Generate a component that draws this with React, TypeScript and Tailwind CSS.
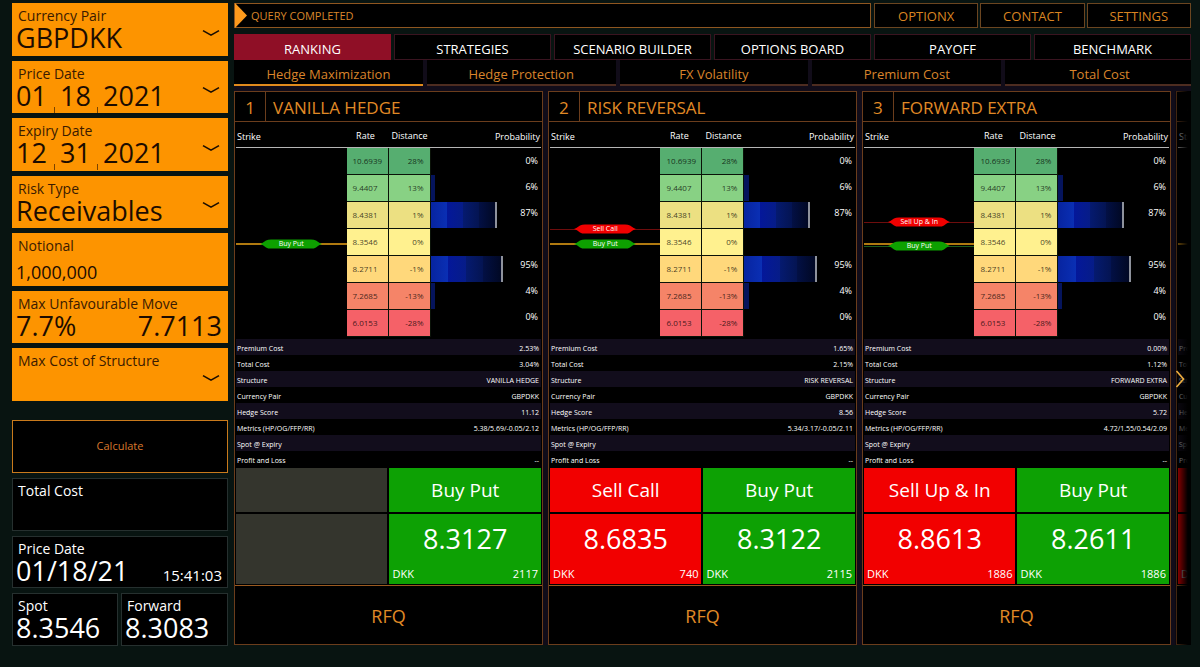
import { useState } from "react";
import type { ReactNode } from "react";

type Side = "buy" | "sell";

interface Marker {
  label: string;
  side: Side;
  top: number;
}

interface Leg {
  label: string;
  side: Side;
  price: string;
  points: string;
}

interface Strategy {
  rank: number;
  title: string;
  markers: Marker[];
  metrics: string[];
  legs: (Leg | null)[];
}

const LADDER = [
  { rate: "10.6939", distance: "28%", tone: "bg-[#56ae70]", bar: 0, capped: false, probability: "0%" },
  { rate: "9.4407", distance: "13%", tone: "bg-[#88d184]", bar: 6, capped: false, probability: "6%" },
  { rate: "8.4381", distance: "1%", tone: "bg-[#ece082]", bar: 82, capped: true, probability: "87%" },
  { rate: "8.3546", distance: "0%", tone: "bg-[#fff18f]", bar: 0, capped: false, probability: "" },
  { rate: "8.2711", distance: "-1%", tone: "bg-[#ffd87b]", bar: 90, capped: true, probability: "95%" },
  { rate: "7.2685", distance: "-13%", tone: "bg-[#f58468]", bar: 5, capped: false, probability: "4%" },
  { rate: "6.0153", distance: "-28%", tone: "bg-[#f56168]", bar: 0, capped: false, probability: "0%" },
];

const METRIC_LABELS = [
  "Premium Cost",
  "Total Cost",
  "Structure",
  "Currency Pair",
  "Hedge Score",
  "Metrics (HP/OG/FFP/RR)",
  "Spot @ Expiry",
  "Profit and Loss",
];

const STRATEGIES: Strategy[] = [
  {
    rank: 1,
    title: "VANILLA HEDGE",
    markers: [{ label: "Buy Put", side: "buy", top: 96 }],
    metrics: ["2.53%", "3.04%", "VANILLA HEDGE", "GBPDKK", "11.12", "5.38/5.69/-0.05/2.12", "", "--"],
    legs: [null, { label: "Buy Put", side: "buy", price: "8.3127", points: "2117" }],
  },
  {
    rank: 2,
    title: "RISK REVERSAL",
    markers: [
      { label: "Sell Call", side: "sell", top: 81 },
      { label: "Buy Put", side: "buy", top: 96 },
    ],
    metrics: ["1.65%", "2.15%", "RISK REVERSAL", "GBPDKK", "8.56", "5.34/3.17/-0.05/2.11", "", "--"],
    legs: [
      { label: "Sell Call", side: "sell", price: "8.6835", points: "740" },
      { label: "Buy Put", side: "buy", price: "8.3122", points: "2115" },
    ],
  },
  {
    rank: 3,
    title: "FORWARD EXTRA",
    markers: [
      { label: "Sell Up & In", side: "sell", top: 74 },
      { label: "Buy Put", side: "buy", top: 98 },
    ],
    metrics: ["0.00%", "1.12%", "FORWARD EXTRA", "GBPDKK", "5.72", "4.72/1.55/0.54/2.09", "", "--"],
    legs: [
      { label: "Sell Up & In", side: "sell", price: "8.8613", points: "1886" },
      { label: "Buy Put", side: "buy", price: "8.2611", points: "1886" },
    ],
  },
  {
    rank: 4,
    title: "",
    markers: [],
    metrics: ["", "", "", "", "", "", "", ""],
    legs: [{ label: "", side: "sell", price: "", points: "" }, null],
  },
];

const TABS = ["RANKING", "STRATEGIES", "SCENARIO BUILDER", "OPTIONS BOARD", "PAYOFF", "BENCHMARK"];
const SUBTABS = ["Hedge Maximization", "Hedge Protection", "FX Volatility", "Premium Cost", "Total Cost"];

function Chevron() {
  return (
    <svg viewBox="0 0 18 8" className="h-2 w-[18px]" fill="none" stroke="#1a0d00" strokeWidth="1.6" aria-hidden="true">
      <path d="M1 1.6 L9 6.2 L17 1.6" />
    </svg>
  );
}

function Field({ label, htmlFor, children }: { label: string; htmlFor: string; children?: ReactNode }) {
  return (
    <div className="relative flex flex-col bg-[#fd9400] px-1 pt-1 text-[#1c0c00]">
      <label htmlFor={htmlFor} className="block pl-0.5 text-sm leading-[17px] text-[#3a1a00]">
        {label}
      </label>
      {children}
    </div>
  );
}

function SelectField({ id, label, options }: { id: string; label: string; options: string[] }) {
  return (
    <Field label={label} htmlFor={id}>
      <select id={id} className="h-7 w-full appearance-none bg-transparent text-[27px] leading-7 outline-none">
        {options.map((o) => (
          <option key={o}>{o}</option>
        ))}
      </select>
      <span className="pointer-events-none absolute right-2 bottom-[19px]">
        <Chevron />
      </span>
    </Field>
  );
}

function DateField({ id, label, parts }: { id: string; label: string; parts: [string, string, string] }) {
  return (
    <Field label={label} htmlFor={id}>
      <div className="flex h-[31px] items-start text-[27px] leading-7">
        <input id={id} defaultValue={parts[0]} className="h-7 w-[38px] bg-transparent outline-none" />
        <span className="h-[6px] w-px self-end bg-[#7a4300]" />
        <input aria-label={`${label} day`} defaultValue={parts[1]} className="h-7 w-[42px] bg-transparent pl-[5px] outline-none" />
        <span className="h-[6px] w-px self-end bg-[#7a4300]" />
        <input aria-label={`${label} year`} defaultValue={parts[2]} className="h-7 w-[72px] bg-transparent pl-[5px] outline-none" />
      </div>
      <button type="button" aria-label={`Open ${label}`} className="absolute right-2 bottom-[19px]">
        <Chevron />
      </button>
    </Field>
  );
}

function Readout({ label, children }: { label: string; children?: ReactNode }) {
  return (
    <div className="border border-[#26302f] bg-black px-[3px] pt-1 text-white">
      <div className="pl-0.5 text-sm leading-4">{label}</div>
      {children}
    </div>
  );
}

function Sidebar() {
  return (
    <aside className="w-[216px] shrink-0">
      <form className="grid h-[398px] auto-rows-fr gap-[5px]">
        <SelectField id="pair" label="Currency Pair" options={["GBPDKK"]} />
        <DateField id="price-date" label="Price Date" parts={["01", "18", "2021"]} />
        <DateField id="expiry-date" label="Expiry Date" parts={["12", "31", "2021"]} />
        <SelectField id="risk" label="Risk Type" options={["Receivables"]} />
        <Field label="Notional" htmlFor="notional">
          <input
            id="notional"
            defaultValue="1,000,000"
            className="mt-1.5 h-6 w-full bg-transparent text-lg leading-6 outline-none"
          />
        </Field>
        <Field label="Max Unfavourable Move" htmlFor="move">
          <div className="flex h-7 justify-between text-[27px] leading-7">
            <input id="move" defaultValue="7.7%" className="w-20 bg-transparent outline-none" />
            <input
              aria-label="Max unfavourable rate"
              defaultValue="7.7113"
              className="w-24 bg-transparent pr-0.5 text-right outline-none"
            />
          </div>
        </Field>
        <SelectField id="max-cost" label="Max Cost of Structure" options={[""]} />
      </form>
      <div className="mt-[19px] grid h-[226px] auto-rows-fr gap-[5px]">
        <button type="button" className="border border-[#c97a1c] bg-black text-[11px] text-[#d9782d]">
          Calculate
        </button>
        <Readout label="Total Cost" />
        <Readout label="Price Date">
          <div className="flex items-baseline justify-between pr-0.5">
            <span className="text-[27px] leading-7">01/18/21</span>
            <span className="text-[15px] leading-5">15:41:03</span>
          </div>
        </Readout>
        <div className="grid grid-cols-[106px_1fr] gap-[3px]">
          <Readout label="Spot">
            <div className="text-[27px] leading-7">8.3546</div>
          </Readout>
          <Readout label="Forward">
            <div className="text-[27px] leading-7">8.3083</div>
          </Readout>
        </div>
      </div>
    </aside>
  );
}

function MarkerLine({ marker }: { marker: Marker }) {
  return (
    <div
      className={marker.side === "buy" ? "absolute inset-x-0 h-px bg-[#1d5c1d]" : "absolute inset-x-0 h-px bg-[#6e0d0d]"}
      style={{ top: marker.top }}
    />
  );
}

function MarkerTag({ marker }: { marker: Marker }) {
  return (
    <div className="absolute inset-x-0 flex h-[10px] -translate-y-1/2 items-center justify-center" style={{ top: marker.top }}>
      <svg
        viewBox="0 0 62 10"
        className="absolute h-[10px] w-[62px]"
        fill={marker.side === "buy" ? "#0da000" : "#f00000"}
        aria-hidden="true"
      >
        <path d="M0 5 Q3 4 6 1.6 Q8 0.4 11 0.4 H51 Q54 0.4 56 1.6 Q59 4 62 5 Q59 6 56 8.4 Q54 9.6 51 9.6 H11 Q8 9.6 6 8.4 Q3 6 0 5 Z" />
      </svg>
      <span className="relative text-[7px] leading-[10px] text-white">{marker.label}</span>
    </div>
  );
}

function ProbabilityBar({ width, capped }: { width: number; capped: boolean }) {
  if (width === 0) return null;
  if (!capped) return <div className="h-full bg-[#05145c]" style={{ width: `${width}%` }} />;
  return (
    <div className="flex h-full" style={{ width: `${width}%` }}>
      <span className="flex-1 bg-linear-to-r from-[#0724a0] to-[#0a2fb4]" />
      <span className="flex-1 bg-linear-to-r from-[#04179a] to-[#061c88]" />
      <span className="flex-1 bg-linear-to-r from-[#051a70] to-[#041452]" />
      <span className="flex-1 bg-linear-to-r from-[#031045] to-[#010824]" />
      <span className="w-[2px] bg-[#8e929c]" />
    </div>
  );
}

function Ladder({ markers }: { markers: Marker[] }) {
  return (
    <div className="flex h-[217px] text-[9px] text-white">
      <div className="flex flex-1 flex-col">
        <div className="h-[26px] border-b border-[#b5b5b5] pl-px leading-[29px]">Strike</div>
        <div className="relative flex-1">
          {markers.map((m) => (
            <MarkerLine key={m.label} marker={m} />
          ))}
          <div className="absolute inset-x-0 top-[95px] h-[2px] bg-[#b07a10]" />
          {markers.map((m) => (
            <MarkerTag key={m.label} marker={m} />
          ))}
        </div>
      </div>
      <table className="h-[215px] w-[84px] table-fixed border-separate border-spacing-0">
        <thead>
          <tr className="h-[26px]">
            <th className="border-b border-[#b5b5b5] p-0 pt-0.5 pr-1 text-center font-normal leading-[23px]">Rate</th>
            <th className="border-b border-[#b5b5b5] p-0 pt-0.5 text-center font-normal leading-[23px]">Distance</th>
          </tr>
        </thead>
        <tbody>
          {LADDER.map((row) => (
            <tr key={row.rate} className="h-[27px] text-[8px] text-black/75">
              <td className={`border-r border-b border-[#0a1208] p-0 pl-1.5 ${row.tone}`}>{row.rate}</td>
              <td className={`border-r border-b border-[#0a1208] p-0 pr-1.5 text-right ${row.tone}`}>{row.distance}</td>
            </tr>
          ))}
        </tbody>
      </table>
      <div className="flex flex-1 flex-col">
        <div className="h-[26px] border-b border-[#b5b5b5] pr-px text-right leading-[29px]">Probability</div>
        <div className="flex flex-1">
          <div className="flex-1">
            {LADDER.map((row) => (
              <div key={row.rate} className="h-[27px] pb-px">
                <ProbabilityBar width={row.bar} capped={row.capped} />
              </div>
            ))}
          </div>
          <ul className="w-[30px] pr-[3px] text-right">
            {LADDER.map((row) => (
              <li key={row.rate} className="h-[26px] leading-[26px]">
                {row.probability}
              </li>
            ))}
          </ul>
        </div>
      </div>
    </div>
  );
}

function LegCells({ leg }: { leg: Leg | null }) {
  if (!leg) {
    return (
      <div className="grid grid-rows-[44px_70px] gap-[2px]">
        <div className="bg-[#34352d]" />
        <div className="bg-[#34352d]" />
      </div>
    );
  }
  const tone = leg.side === "buy" ? "bg-[#0da104]" : "bg-[#f20000]";
  return (
    <div className="grid grid-rows-[44px_70px] gap-[2px] text-white">
      <div className={`flex items-center justify-center text-[19px] whitespace-nowrap ${tone}`}>{leg.label}</div>
      <button type="button" aria-label={`${leg.label} ${leg.price}`} className={`flex flex-col justify-between px-[3px] pt-[7px] pb-0.5 ${tone}`}>
        <span className="h-9 w-full text-center text-[27px] leading-9">{leg.price}</span>
        <span className="flex w-full justify-between text-[11px] leading-4">
          <span>DKK</span>
          <span>{leg.points}</span>
        </span>
      </button>
    </div>
  );
}

function StrategyCard({ strategy }: { strategy: Strategy }) {
  return (
    <article className="w-[calc((100%-30px)/3)] shrink-0 border border-[#6b3d1c] bg-black">
      <header className="flex h-[30px] items-stretch border-b border-[#6b3d1c] text-[17px] text-[#e08a26]">
        <span className="flex w-[31px] items-center justify-center border-r border-[#6b3d1c] pt-0.5">{strategy.rank}</span>
        <h2 className="flex items-center pt-0.5 pl-[7px]">{strategy.title}</h2>
      </header>
      <div className="px-px">
        <Ladder markers={strategy.markers} />
        <table className="w-full text-[7px] leading-[13px] font-medium text-white">
          <tbody>
            {METRIC_LABELS.map((label, i) => (
              <tr key={label} className="h-4 odd:bg-[#120d1c]">
                <th scope="row" className="p-0 pt-0.5 pl-px text-left font-medium">
                  {label}
                </th>
                <td className="p-0 pt-0.5 pr-0.5 text-right">{strategy.metrics[i]}</td>
              </tr>
            ))}
          </tbody>
        </table>
        <div className="grid grid-cols-2 gap-[2px] pt-px pb-px">
          {strategy.legs.map((leg, i) => (
            <LegCells key={i} leg={leg} />
          ))}
        </div>
      </div>
      <button type="button" className="h-[59px] w-full border-t border-[#9a5a20] pt-0.5 text-lg text-[#e08a26]">
        RFQ
      </button>
    </article>
  );
}

export default function App() {
  const [tab, setTab] = useState(TABS[0]);
  const [subtab, setSubtab] = useState(SUBTABS[0]);

  return (
    <div className="flex min-h-screen gap-1.5 bg-[#081411] pt-[3px] pr-[9px] pb-5 pl-3 font-['Open_Sans','Noto_Sans',sans-serif]">
      <Sidebar />
      <main className="min-w-0 flex-1">
        <div className="grid grid-cols-6 gap-[3px]">
          <div className="col-span-4 flex h-[25px] items-center border border-[#8f5620] bg-black text-[11px] text-[#d9862b]">
            <svg viewBox="0 0 12 25" className="h-[25px] w-3" fill="#fd9a1c" aria-hidden="true">
              <path d="M0 0 L12 12.5 L0 25 Z" />
            </svg>
            <span className="pt-0.5 pl-1">QUERY COMPLETED</span>
          </div>
          <nav className="col-span-2 grid grid-cols-3 gap-[2px]">
            {["OPTIONX", "CONTACT", "SETTINGS"].map((item) => (
              <a
                key={item}
                href={`#${item.toLowerCase()}`}
                className="flex items-center justify-center border border-[#6b4520] bg-black pt-0.5 text-[13px] text-[#d98420]"
              >
                {item}
              </a>
            ))}
          </nav>
        </div>
        <div role="tablist" className="mt-1.5 grid grid-cols-6 gap-[3px]">
          {TABS.map((t) => (
            <button
              key={t}
              type="button"
              role="tab"
              aria-selected={t === tab}
              onClick={() => setTab(t)}
              className={
                t === tab
                  ? "h-[26px] border border-[#8f0f26] bg-[#8f0f26] pt-1 text-[13px] leading-5 whitespace-nowrap text-white"
                  : "h-[26px] border border-[#3a1420] bg-black pt-1 text-[13px] leading-5 whitespace-nowrap text-white"
              }
            >
              {t}
            </button>
          ))}
        </div>
        <div className="overflow-hidden bg-[#110c19]">
          <div role="tablist" className="-mr-[3px] grid grid-cols-5 gap-1">
            {SUBTABS.map((t) => (
              <button
                key={t}
                type="button"
                role="tab"
                aria-selected={t === subtab}
                onClick={() => setSubtab(t)}
                className={
                  t === subtab
                    ? "h-[26px] border-b-2 border-[#e08a1c] bg-black pt-1 text-[13px] leading-5 text-[#d9842b]"
                    : "h-[26px] border-b-2 border-[#4d2c20] bg-black pt-1 text-[13px] leading-5 text-[#d9842b]"
                }
              >
                {t}
              </button>
            ))}
          </div>
          <section className="relative mt-[5px]">
            <div className="flex gap-[5px] overflow-hidden">
              {STRATEGIES.map((s) => (
                <StrategyCard key={s.rank} strategy={s} />
              ))}
            </div>
            <div className="pointer-events-none absolute inset-y-0 right-0 w-4 bg-linear-to-r from-black/30 to-black to-80%" />
            <button type="button" aria-label="Next strategies" className="absolute top-[279px] right-1.5 h-[18px] w-[10px]">
              <svg viewBox="0 0 10 18" className="h-[18px] w-[10px]" fill="none" stroke="#f0b040" strokeWidth="1.6" aria-hidden="true">
                <path d="M1.5 1 L8.5 9 L1.5 17" />
              </svg>
            </button>
          </section>
        </div>
      </main>
    </div>
  );
}
